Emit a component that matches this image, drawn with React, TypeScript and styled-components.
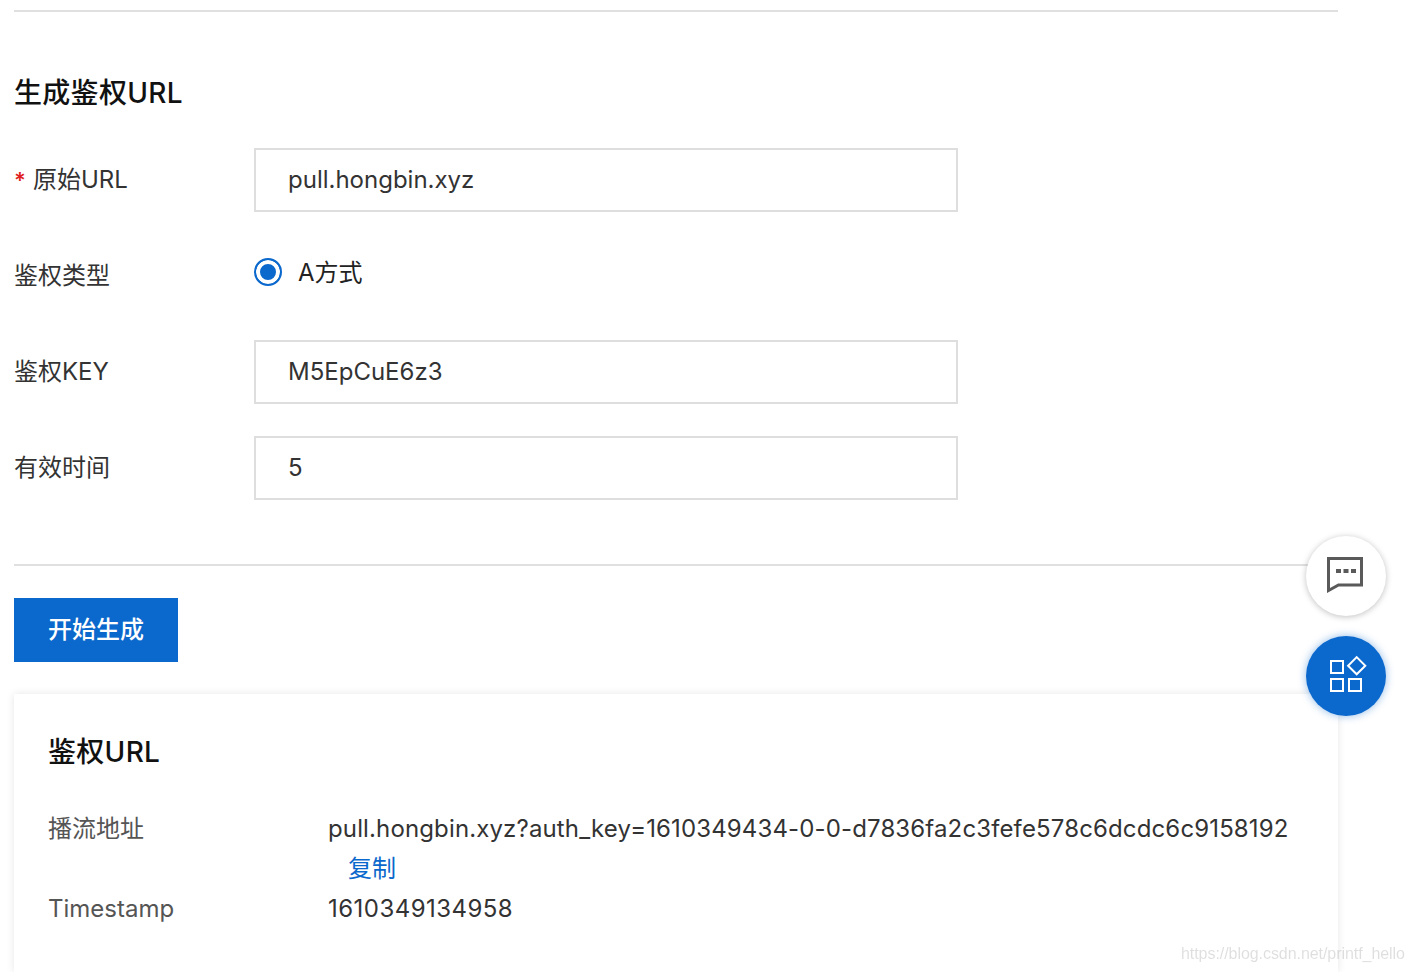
import React from 'react';
import styled, { createGlobalStyle } from 'styled-components';

const GlobalStyle = createGlobalStyle`
    html, body {
        margin: 0;
        padding: 0;
        height: 972px;
        overflow: hidden;
        background: #fff;
        font-family: Inter, "Noto Sans CJK SC", sans-serif;
    }
    * {
        box-sizing: border-box;
    }
`;

const Page = styled.div`
    width: 1338px;
    padding: 10px 0 0 14px;
`;

const Rule = styled.div`
    height: 2px;
    background: #e0e0e0;
`;

const Heading = styled.h2`
    margin: 61px 0 0;
    height: 40px;
    font-size: 28px;
    line-height: 40px;
    font-weight: 500;
    letter-spacing: 0.3px;
    color: #111;
`;

const Form = styled.div`
    display: flex;
    flex-direction: column;
    gap: 32px;
    margin-top: 35px;
`;

const Row = styled.div`
    display: flex;
    height: 64px;
    align-items: center;
`;

const Label = styled.label`
    width: 240px;
    flex: none;
    font-size: 24px;
    line-height: 32px;
    color: #333;
`;

const Star = styled.span`
    display: inline-block;
    width: 19px;
    color: #e02020;
    font-size: 22px;
    font-weight: 600;
`;

const Input = styled.input`
    width: 704px;
    height: 64px;
    padding: 0 32px 2px;
    border: 2px solid #dedede;
    outline: none;
    background: #fff;
    font-family: inherit;
    font-size: 24px;
    color: #333;
`;

const RadioRow = styled.div`
    display: flex;
    align-items: center;
    gap: 16px;
    margin-top: -8px;
    font-size: 24px;
    color: #222;
`;

const RadioDot = styled.span`
    width: 28px;
    height: 28px;
    border: 2px solid #0b68cc;
    border-radius: 50%;
    background: #0b68cc;
    box-shadow: inset 0 0 0 4px #fff;
`;

const RadioText = styled.span`
    margin-top: -4px;
`;

const FormRule = styled(Rule)`
    margin-top: 64px;
`;

const PrimaryButton = styled.button`
    display: block;
    width: 164px;
    height: 64px;
    margin-top: 32px;
    padding: 0 0 5px;
    border: 0;
    background: #0b68cc;
    color: #fff;
    font-family: inherit;
    font-size: 24px;
    font-weight: 500;
`;

const Card = styled.section`
    height: 278px;
    margin-top: 32px;
    padding: 38px 34px 0;
    background: #fff;
    box-shadow: 0 0 8px rgba(0, 0, 0, 0.1);
`;

const CardHeading = styled.h3`
    margin: 0 0 37px;
    font-size: 28px;
    line-height: 40px;
    font-weight: 500;
    letter-spacing: 0.3px;
    color: #111;
`;

const InfoRow = styled.div`
    display: flex;
    font-size: 24px;
    line-height: 40px;
`;

const InfoKey = styled.div`
    width: 280px;
    flex: none;
    color: #555;
`;

const InfoValue = styled.div<{ $spacing: number }>`
    color: #333;
    white-space: nowrap;
    letter-spacing: ${props => props.$spacing}px;
`;

const CopyLink = styled.a`
    display: block;
    padding-left: 20px;
    letter-spacing: 0;
    color: #0b68cc;
`;

const FloatButton = styled.button<{ $primary?: boolean }>`
    position: fixed;
    left: 1306px;
    top: ${props => (props.$primary ? '636px' : '536px')};
    display: flex;
    align-items: center;
    justify-content: center;
    width: 80px;
    height: 80px;
    padding: 0;
    border: 0;
    border-radius: 50%;
    background: ${props => (props.$primary ? '#0b68cc' : '#fff')};
    box-shadow: ${props => (props.$primary ? '0 0 8px rgba(11, 104, 204, 0.45)' : '0 1px 6px rgba(0, 0, 0, 0.25)')};
`;

const FloatIcon = styled.svg<{ $dx: number; $dy: number }>`
    transform: translate(${props => props.$dx}px, ${props => props.$dy}px);
`;

const Watermark = styled.div`
    position: fixed;
    left: 1181px;
    top: 944px;
    font-family: "Liberation Sans", sans-serif;
    font-size: 16px;
    line-height: 20px;
    letter-spacing: -0.06px;
    color: rgba(0, 0, 0, 0.13);
    white-space: nowrap;
`;

const App: React.FC = () => {
    return (
        <>
            <GlobalStyle />
            <Page>
                <Rule />
                <Heading>生成鉴权URL</Heading>
                <Form>
                    <Row>
                        <Label><Star>*</Star>原始URL</Label>
                        <Input defaultValue="pull.hongbin.xyz" />
                    </Row>
                    <Row>
                        <Label>鉴权类型</Label>
                        <RadioRow>
                            <RadioDot />
                            <RadioText>A方式</RadioText>
                        </RadioRow>
                    </Row>
                    <Row>
                        <Label>鉴权KEY</Label>
                        <Input defaultValue="M5EpCuE6z3" />
                    </Row>
                    <Row>
                        <Label>有效时间</Label>
                        <Input defaultValue="5" />
                    </Row>
                </Form>
                <FormRule />
                <PrimaryButton>开始生成</PrimaryButton>
                <Card>
                    <CardHeading>鉴权URL</CardHeading>
                    <InfoRow>
                        <InfoKey>播流地址</InfoKey>
                        <InfoValue $spacing={0.135}>
                            pull.hongbin.xyz?auth_key=1610349434-0-0-d7836fa2c3fefe578c6dcdc6c9158192
                            <CopyLink>复制</CopyLink>
                        </InfoValue>
                    </InfoRow>
                    <InfoRow>
                        <InfoKey>Timestamp</InfoKey>
                        <InfoValue $spacing={0.46}>1610349134958</InfoValue>
                    </InfoRow>
                </Card>
            </Page>
            <FloatButton>
                <FloatIcon $dx={-1} $dy={-1} width="36" height="36" viewBox="0 0 36 36" fill="none">
                    <path d="M1.500 1.500h33v26.500H11.500l-10 5.500z" stroke="#5a5a5a" strokeWidth="3" />
                    <rect x="9" y="12" width="5" height="4" fill="#5a5a5a" />
                    <rect x="16.500" y="12" width="5" height="4" fill="#5a5a5a" />
                    <rect x="24" y="12" width="5" height="4" fill="#5a5a5a" />
                </FloatIcon>
            </FloatButton>
            <FloatButton $primary>
                <FloatIcon $dx={2} $dy={-2} width="38" height="38" viewBox="0 0 38 38" fill="none" stroke="#fff" strokeWidth="2">
                    <rect x="2" y="6" width="12" height="12" />
                    <rect x="2" y="24" width="12" height="12" />
                    <rect x="20" y="24" width="12" height="12" />
                    <path d="M27.700 2.100l8.600 8.600-8.600 8.600-8.600-8.600z" />
                </FloatIcon>
            </FloatButton>
            <Watermark>https://blog.csdn.net/printf_hello</Watermark>
        </>
    );
};

export default App;
